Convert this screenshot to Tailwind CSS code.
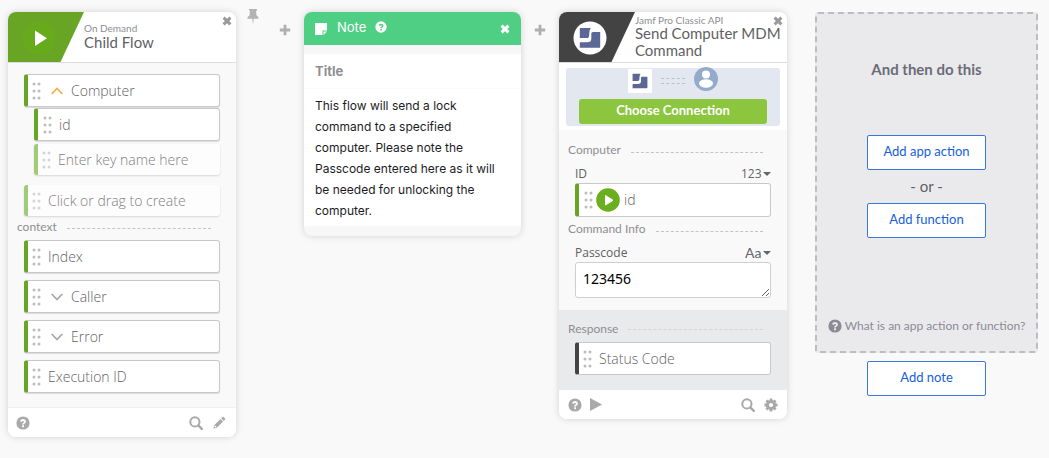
<!DOCTYPE html>
<html lang="en">
<head>
<meta charset="utf-8">
<title>Flow editor</title>
<script src="https://cdn.jsdelivr.net/npm/@tailwindcss/browser@4"></script>
</head>
<body class="min-h-screen bg-[#f9f9f9] font-['Lato',sans-serif] text-[#5f5f64]">
<svg class="hidden" aria-hidden="true">
  <symbol id="grip" viewBox="0 0 10 18"><g fill="#bcbcbc"><circle cx="2" cy="2" r="1.500"/><circle cx="7" cy="2" r="1.500"/><circle cx="2" cy="9" r="1.500"/><circle cx="7" cy="9" r="1.500"/><circle cx="2" cy="16" r="1.500"/><circle cx="7" cy="16" r="1.500"/></g></symbol>
  <symbol id="close" viewBox="0 0 10 10"><path d="M1.600 1.600l6.800 6.800M8.400 1.600L1.600 8.400" stroke="currentColor" stroke-width="3" fill="none"/></symbol>
  <symbol id="plus" viewBox="0 0 12 12"><path d="M6 .8v10.400M.8 6h10.400" stroke="currentColor" stroke-width="2.800" fill="none"/></symbol>
  <symbol id="help" viewBox="0 0 14 14"><path fill="currentColor" fill-rule="evenodd" d="M7 .4a6.600 6.600 0 1 1 0 13.200A6.600 6.600 0 0 1 7 .4zM6.100 9.300v1.900h1.900V9.300zM4.100 5.300l1.600.7c.3-.7.7-1.100 1.300-1.100.6 0 1 .3 1 .8 0 .4-.3.7-.8 1-.7.4-1.100.9-1.100 1.900h1.800c0-.5.3-.7.8-1 .8-.5 1.200-1.100 1.200-2 0-1.400-1.200-2.500-2.900-2.500-1.500 0-2.500.8-2.900 2.200z"/></symbol>
  <symbol id="search" viewBox="0 0 14 14"><circle cx="5.900" cy="5.900" r="4.600" stroke="currentColor" stroke-width="2" fill="none"/><path d="M9.300 9.300l3.500 3.500" stroke="currentColor" stroke-width="2.400" stroke-linecap="round"/></symbol>
  <symbol id="jamf" viewBox="0 0 22 22"><path fill="#5b6795" d="M1.500 1h10.300C10.700 2.500 10.300 4.500 10.200 8c0 2-.7 3.100-2.600 3.100H.8V1.700C.8 1.200 1 1 1.500 1zM14.200 5h7v14.800c0 .7-.3 1-1 1H.8v-4.600c0-.7.300-1 1-1h6.500c2.800 0 4-1.200 4-3.800V7.200c0-1.500.5-2.200 1.900-2.200z"/></symbol>
</svg>

<main class="flex items-start pt-3 pr-[11px] pb-5 pl-2">

  <!-- Trigger card -->
  <section class="w-[228px] shrink-0 rounded-lg bg-[#f9f9f9] shadow-[0_0_7px_rgba(0,0,0,0.16)]">
    <header class="relative flex h-[51px] items-center overflow-hidden rounded-t-lg border-b border-[#dcdcdc] bg-white">
      <svg class="h-[51px] w-[76px] shrink-0" viewBox="0 0 76 51"><path d="M0 0h76L52 51H0z" fill="#69a524"/><circle cx="31" cy="26" r="16.500" fill="#67ab1c"/><path d="M27 18.500v15.500l12-7.700z" fill="#fff"/></svg>
      <div class="pb-[2px]">
        <p class="text-[10px] leading-3 text-[#8e8e92]">On Demand</p>
        <h2 class="text-[15px] leading-[17px]">Child Flow</h2>
      </div>
      <button aria-label="Remove trigger" class="absolute top-1 right-1 text-[#9a9a9a]"><svg class="size-[10px]"><use href="#close"/></svg></button>
    </header>
    <div class="flex flex-col px-4 pt-[11px] pb-[14px] font-['Open_Sans',sans-serif] text-sm font-light">
      <div class="flex h-[33px] items-center rounded-[3px] border border-l-4 border-[#c9c9c9] border-l-[#69a524] bg-white pl-1 shadow-[0_1px_1px_rgba(0,0,0,0.12)]">
        <svg class="h-[18px] w-[10px]"><use href="#grip"/></svg>
        <button aria-label="Collapse Computer" class="ml-[9px]"><svg class="h-2 w-3" viewBox="0 0 12 8"><path d="M.7 7L6 1.500 11.300 7" fill="none" stroke="#f9ab4b" stroke-width="1.800"/></svg></button>
        <span class="ml-2">Computer</span>
      </div>
      <div class="mt-px ml-[10px] flex h-[33px] items-center rounded-[3px] border border-l-4 border-[#c9c9c9] border-l-[#69a524] bg-white pl-[5px] shadow-[0_1px_1px_rgba(0,0,0,0.12)]">
        <svg class="h-[18px] w-[10px]"><use href="#grip"/></svg><span class="ml-[6px]">id</span>
      </div>
      <label class="mt-[3px] mb-px ml-[10px] flex h-[31px] items-center rounded-[3px] border-l-4 border-[#a0cb79] bg-[#fdfdfd] pl-1 shadow-[0_1px_2px_rgba(0,0,0,0.14)]">
        <svg class="h-[18px] w-[10px] shrink-0 opacity-60"><use href="#grip"/></svg><input aria-label="Key name" placeholder="Enter key name here" class="ml-[6px] w-full min-w-0 font-light placeholder:text-[#7f7f82] outline-none">
      </label>
      <label class="mt-[9px] mb-px flex h-[31px] items-center rounded-[3px] border-l-4 border-[#a0cb79] bg-[#fdfdfd] pl-1 shadow-[0_1px_2px_rgba(0,0,0,0.14)]">
        <svg class="h-[18px] w-[10px] shrink-0 opacity-60"><use href="#grip"/></svg><input aria-label="New output" placeholder="Click or drag to create" class="ml-[6px] w-full min-w-0 font-light placeholder:text-[#7f7f82] outline-none">
      </label>
      <div class="-ml-[7px] mr-[9px] flex h-[23px] items-center gap-[10px] font-['Lato',sans-serif] text-xs font-normal text-[#8e8e92]"><h3 class="pb-1">context</h3><span class="flex-1 border-t border-dashed border-[#c4c4c4]"></span></div>
      <div class="flex flex-col gap-[7px]">
        <div class="flex h-[33px] items-center rounded-[3px] border border-l-4 border-[#c9c9c9] border-l-[#69a524] bg-white pl-1 shadow-[0_1px_1px_rgba(0,0,0,0.12)]"><svg class="h-[18px] w-[10px]"><use href="#grip"/></svg><span class="ml-[6px]">Index</span></div>
        <div class="flex h-[33px] items-center rounded-[3px] border border-l-4 border-[#c9c9c9] border-l-[#69a524] bg-white pl-1 shadow-[0_1px_1px_rgba(0,0,0,0.12)]"><svg class="h-[18px] w-[10px]"><use href="#grip"/></svg>
          <button aria-label="Expand Caller" class="ml-[9px]"><svg class="h-2 w-3" viewBox="0 0 12 8"><path d="M.7 1L6 6.500 11.300 1" fill="none" stroke="#a8a8a8" stroke-width="1.800"/></svg></button><span class="ml-2">Caller</span></div>
        <div class="flex h-[33px] items-center rounded-[3px] border border-l-4 border-[#c9c9c9] border-l-[#69a524] bg-white pl-1 shadow-[0_1px_1px_rgba(0,0,0,0.12)]"><svg class="h-[18px] w-[10px]"><use href="#grip"/></svg>
          <button aria-label="Expand Error" class="ml-[9px]"><svg class="h-2 w-3" viewBox="0 0 12 8"><path d="M.7 1L6 6.500 11.300 1" fill="none" stroke="#a8a8a8" stroke-width="1.800"/></svg></button><span class="ml-2">Error</span></div>
        <div class="flex h-[33px] items-center rounded-[3px] border border-l-4 border-[#c9c9c9] border-l-[#69a524] bg-white pl-1 shadow-[0_1px_1px_rgba(0,0,0,0.12)]"><svg class="h-[18px] w-[10px]"><use href="#grip"/></svg><span class="ml-[6px]">Execution ID</span></div>
      </div>
    </div>
    <footer class="flex h-[30px] items-center rounded-b-lg border-t border-[#f0f0f0] bg-white pr-[10px] pl-2 text-[#a9a9a9]">
      <button aria-label="Help"><svg class="size-[14px]"><use href="#help"/></svg></button>
      <button aria-label="Search" class="ml-auto"><svg class="size-[14px]"><use href="#search"/></svg></button>
      <button aria-label="Edit" class="ml-[10px]"><svg class="size-[13px]" viewBox="0 0 13 13" fill="currentColor"><path d="M9.300 1.200c.5-.5 1-.5 1.500 0l1.100 1.100c.5.500.5 1 0 1.500l-1.100 1.100-2.600-2.600zM7.500 3l2.600 2.600-6 6L.3 12.700l1.100-3.700zM2 9.600l-.5 1.900 1.900-.5-.4-1z" fill-rule="evenodd"/></svg></button>
    </footer>
  </section>

  <button aria-label="Pin" class="-mt-[3px] ml-[11px] text-[#b3b3b3]"><svg class="h-4 w-3" viewBox="0 0 12 16" fill="currentColor"><path d="M2 0h8v1.800H9L9.500 6.500c1.500.8 2.200 1.900 2.200 3.300H6.700L6 15.500 5.300 9.800H.3c0-1.400.7-2.500 2.200-3.300L3 1.800H2z"/></svg></button>
  <button aria-label="Add step after trigger" class="mt-3 ml-5 text-[#b0b0b0]"><svg class="size-3"><use href="#plus"/></svg></button>

  <!-- Note card -->
  <section class="ml-[13px] w-[217px] shrink-0 rounded-lg bg-[#f7f7f7] pb-[10px] font-['Inter',sans-serif] shadow-[0_0_7px_rgba(0,0,0,0.16)]">
    <header class="mb-[9px] flex h-[33px] items-center rounded-t-lg bg-[#4fcf84] px-[11px] text-white">
      <svg class="size-3" viewBox="0 0 12 12" fill="currentColor"><path d="M0 0h12v7.500H7.500V12H0zM8.500 8.500H12L8.500 12z"/></svg>
      <h2 class="ml-[10px] pb-1 text-[13px] leading-4">Note</h2>
      <button aria-label="About notes" class="ml-[9px] pb-1"><svg class="size-3" viewBox="0 0 14 14"><use href="#help" width="14" height="14"/></svg></button>
      <button aria-label="Remove note" class="ml-auto"><svg class="size-[10px]"><use href="#close"/></svg></button>
    </header>
    <input aria-label="Note title" placeholder="Title" class="block h-[35px] w-full border-b border-[#fafafa] bg-white px-[11px] text-[13px] font-bold outline-none placeholder:text-[#8e8e96]">
    <textarea aria-label="Note text" rows="6" class="block w-full resize-none overflow-hidden bg-white pt-[6px] pr-4 pb-[5px] pl-[11px] text-xs leading-[21px] text-[#1c1c1f] outline-none">This flow will send a lock command to a specified computer. Please note the Passcode entered here as it will be needed for unlocking the computer.</textarea>
  </section>

  <button aria-label="Add step after note" class="mt-3 ml-[13px] text-[#b0b0b0]"><svg class="size-3"><use href="#plus"/></svg></button>

  <!-- Action card -->
  <section class="ml-[13px] w-[228px] shrink-0 rounded-lg bg-[#f9f9f9] shadow-[0_0_7px_rgba(0,0,0,0.16)]">
    <header class="relative flex h-[51px] overflow-hidden rounded-t-lg border-b border-[#dcdcdc] bg-white">
      <svg class="h-[51px] w-[76px] shrink-0" viewBox="0 0 76 51"><path d="M0 0h76L52 51H0z" fill="#434343"/><circle cx="31" cy="26" r="16.500" fill="#fff"/><svg x="20" y="15" width="22" height="22"><use href="#jamf"/></svg></svg>
      <div class="pt-[3px]">
        <p class="text-[10px] leading-[10px] text-[#8e8e92]">Jamf Pro Classic API</p>
        <h2 class="text-[15px] leading-[17px]">Send Computer MDM Command</h2>
      </div>
      <button aria-label="Remove action" class="absolute top-1 right-1 text-[#9a9a9a]"><svg class="size-[10px]"><use href="#close"/></svg></button>
    </header>
    <div class="bg-white px-[7px] pt-[5px] pb-1">
      <div class="rounded-[3px] bg-[#e3e8f0] px-[13px] pb-[2px]">
        <div class="flex h-[31px] items-start justify-center gap-[9px]">
          <span class="mt-px flex size-6 items-center justify-center bg-white"><svg class="size-4"><use href="#jamf"/></svg></span>
          <span class="mt-[10px] h-[6px] w-6 border-y border-dashed border-[#b3c2da]"></span>
          <svg class="-mt-[1px] size-6" viewBox="0 0 24 24"><circle cx="12" cy="12" r="12" fill="#95abcb"/><circle cx="12" cy="7.500" r="4" fill="#fff"/><ellipse cx="12" cy="16.500" rx="7" ry="4.200" fill="#fff"/></svg>
        </div>
        <button class="block h-[25px] w-full rounded-[3px] bg-[#8cc63f] pb-1 text-[13px] leading-5 font-bold text-white">Choose Connection</button>
      </div>
    </div>
    <div class="pt-[10px] pr-4 pb-3 pl-4">
      <div class="-ml-[7px] mr-[8px] flex h-5 items-center gap-[10px] text-xs text-[#8e8e92]"><h3>Computer</h3><span class="mt-1 flex-1 border-t border-dashed border-[#c4c4c4]"></span></div>
      <div class="mt-[5px] flex h-[18px] items-center justify-between font-['Open_Sans',sans-serif] text-xs">
        <span>ID</span>
        <span class="relative flex items-center"><select aria-label="ID type" class="appearance-none pr-[9px] text-[#66666c] outline-none"><option>123</option></select><svg class="pointer-events-none absolute right-0 h-1 w-2" viewBox="0 0 8 4"><path d="M0 0h8L4 4z" fill="#666"/></svg></span>
      </div>
      <div class="flex h-[34px] items-center rounded-[3px] border border-l-4 border-[#c9c9c9] border-l-[#69a524] bg-white pl-[5px] font-['Open_Sans',sans-serif] text-sm font-light">
        <svg class="h-[18px] w-[10px]"><use href="#grip"/></svg>
        <svg class="ml-[2px] size-6" viewBox="0 0 24 24"><circle cx="12" cy="12" r="11.800" fill="#6bae1f"/><path d="M9.500 7.500v9.500l7.500-4.700z" fill="#fff" stroke="#fff"/></svg>
        <span class="ml-1">id</span>
      </div>
      <div class="-ml-[7px] mr-[8px] mt-[2px] flex h-5 items-center gap-[10px] text-xs text-[#8e8e92]"><h3>Command Info</h3><span class="mt-1 flex-1 border-t border-dashed border-[#c4c4c4]"></span></div>
      <div class="mt-[5px] flex h-[18px] items-center justify-between font-['Open_Sans',sans-serif] text-xs">
        <label for="passcode">Passcode</label>
        <span class="relative flex items-center"><select aria-label="Passcode type" class="appearance-none pr-[9px] font-['Lato',sans-serif] text-sm text-[#66666c] outline-none"><option>Aa</option></select><svg class="pointer-events-none absolute right-0 h-1 w-2" viewBox="0 0 8 4"><path d="M0 0h8L4 4z" fill="#666"/></svg></span>
      </div>
      <textarea id="passcode" class="block h-9 w-full resize overflow-hidden rounded-[3px] border border-[#cfcfcf] bg-white px-[7px] py-[6px] font-['Noto_Sans',sans-serif] text-sm leading-5 text-black outline-none">123456</textarea>
    </div>
    <div class="bg-[#e9eaec] pt-[9px] pr-4 pb-[15px] pl-4">
      <div class="-ml-[7px] mr-[8px] flex h-5 items-center gap-[10px] text-xs text-[#8e8e92]"><h3>Response</h3><span class="flex-1 border-t border-dashed border-[#d4d4d6]"></span></div>
      <div class="mt-[3px] flex h-[33px] items-center rounded-[3px] border border-l-4 border-[#c9c9c9] border-l-[#434343] bg-white pl-1 font-['Open_Sans',sans-serif] text-sm font-light"><svg class="h-[18px] w-[10px]"><use href="#grip"/></svg><span class="ml-[6px]">Status Code</span></div>
    </div>
    <footer class="flex h-[29px] items-center rounded-b-lg bg-white px-[9px] text-[#a9a9a9]">
      <button aria-label="Help"><svg class="size-[14px]"><use href="#help"/></svg></button>
      <button aria-label="Run" class="ml-[8px]"><svg class="h-[13px] w-3" viewBox="0 0 12 13"><path d="M0 0l12 6.500L0 13z" fill="currentColor"/></svg></button>
      <button aria-label="Search" class="ml-auto"><svg class="size-[14px]"><use href="#search"/></svg></button>
      <button aria-label="Settings" class="ml-[9px]"><svg class="size-[14px]" viewBox="-7 -7 14 14"><circle r="3.600" fill="none" stroke="currentColor" stroke-width="3"/><path d="M0-6.500v2.500M0 4v2.500M-6.500 0H-4M4 0h2.500M-4.600-4.600l1.800 1.800M2.800 2.800l1.800 1.800M-4.600 4.600l1.800-1.800M2.800-2.800l1.800-1.800" stroke="currentColor" stroke-width="2.800"/></svg></button>
    </footer>
  </section>

  <!-- Next step -->
  <aside class="ml-7 flex min-w-[223px] flex-1 flex-col items-center">
    <div class="flex w-full flex-col items-center rounded-[3px] border-2 border-dashed border-[#bdbdbf] bg-[#eaeaec] pt-[43px] pb-[15px]">
      <h2 class="text-[15px] leading-6 font-bold text-[#6c6c78]">And then do this</h2>
      <button class="mt-[54px] h-[35px] w-[119px] rounded-[2px] border border-[#3a77dd] bg-white pb-px text-[13px] text-[#1660dc]">Add app action</button>
      <p class="pt-[6px] pb-[7px] text-[15px] leading-5">- or -</p>
      <button class="h-[35px] w-[119px] rounded-[2px] border border-[#3a77dd] bg-white pb-px text-[13px] text-[#1660dc]">Add function</button>
      <a href="#" class="mt-[78px] flex items-center gap-[3px] text-xs leading-5 text-[#8b8b96]"><svg class="size-[14px]"><use href="#help"/></svg>What is an app action or function?</a>
    </div>
    <button class="mt-2 h-[35px] w-[119px] rounded-[2px] border border-[#3a77dd] bg-white pb-px text-[13px] text-[#1660dc]">Add note</button>
  </aside>
</main>
</body>
</html>
